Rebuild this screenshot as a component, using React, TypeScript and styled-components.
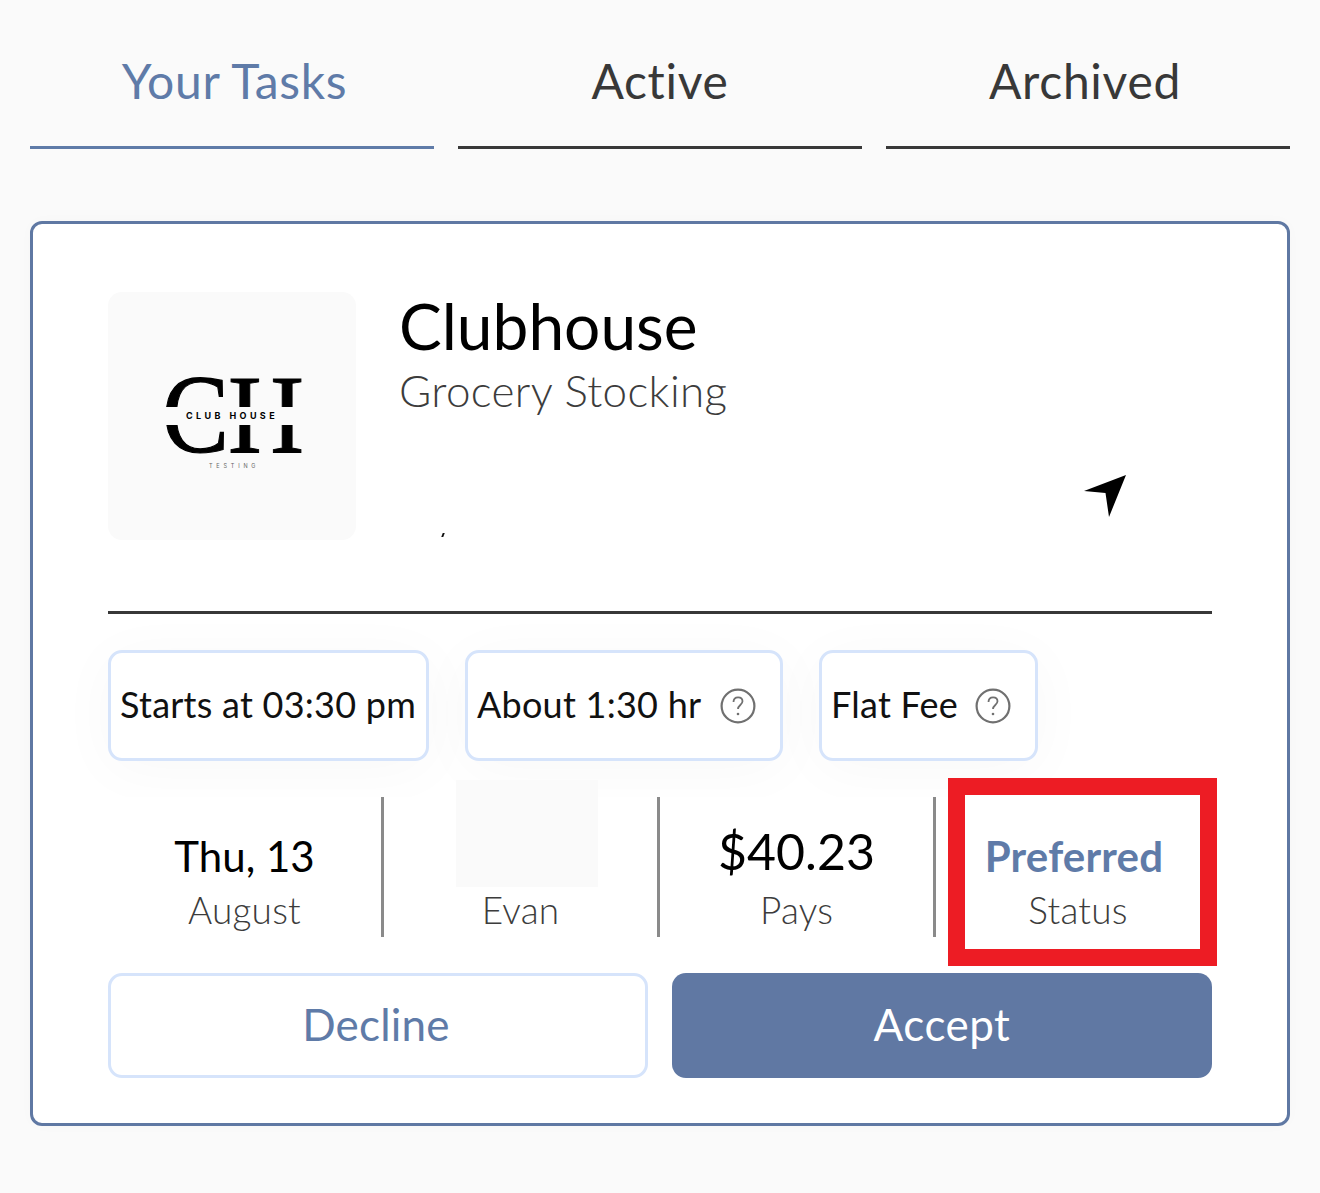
import React from 'react';
import styled, { createGlobalStyle } from 'styled-components';

const GlobalStyle = createGlobalStyle`
    html, body {
        margin: 0;
        padding: 0;
        background: #fafafa;
        font-family: Lato, "Open Sans", sans-serif;
    }
    * {
        box-sizing: border-box;
    }
`;

const Page = styled.div`
    width: 1320px;
    height: 1193px;
    padding: 0 30px;
    overflow: hidden;
`;

const Tabs = styled.div`
    display: grid;
    grid-template-columns: repeat(3, 404px);
    gap: 24px;
    height: 149px;
`;

const Tab = styled.div<{ $active?: boolean; $nudge?: number }>`
    display: flex;
    justify-content: center;
    padding-top: 51px;
    padding-left: ${(p) => Math.max(p.$nudge || 0, 0)}px;
    padding-right: ${(p) => Math.max(-(p.$nudge || 0), 0)}px;
    font-size: 48px;
    line-height: 60px;
    letter-spacing: 0.7px;
    color: ${(p) => (p.$active ? '#5f7ba8' : '#383838')};
    border-bottom: 3px solid ${(p) => (p.$active ? '#5f7ba8' : '#383838')};
`;

const Card = styled.div`
    margin-top: 72px;
    height: 905px;
    padding: 68px 75px 0;
    background: #fff;
    border: 3px solid #5f78a3;
    border-radius: 12px;
    box-shadow: 0 0 14px rgba(0, 0, 0, 0.02);
`;

const Header = styled.div`
    display: flex;
    gap: 43px;
    height: 248px;
`;

const LogoBox = styled.div`
    flex: 0 0 248px;
    height: 248px;
    background: #fafafa;
    border-radius: 14px;
`;

const Info = styled.div`
    flex: 1;
    display: flex;
    flex-direction: column;
`;

const Title = styled.div`
    font-size: 64px;
    line-height: 68px;
    color: #000;
`;

const Subtitle = styled.div`
    margin-top: 1px;
    font-size: 44px;
    line-height: 58px;
    font-weight: 300;
    letter-spacing: 0.35px;
    color: #3c3c3c;
`;

const LocationRow = styled.div`
    margin-top: auto;
    display: flex;
    justify-content: space-between;
    align-items: flex-end;
`;

const Tick = styled.span`
    width: 2px;
    height: 4px;
    margin: 0 0 3px 43px;
    background: #111;
    transform: skewX(-20deg);
`;

const Arrow = styled.svg`
    width: 44px;
    height: 44px;
    margin: 0 84px 21px 0;
`;

const Divider = styled.div`
    margin-top: 71px;
    height: 3px;
    background: #383838;
`;

const Chips = styled.div`
    display: flex;
    gap: 36px;
    margin-top: 36px;
`;

const Chip = styled.div<{ $w: number }>`
    width: ${(p) => p.$w}px;
    height: 111px;
    display: flex;
    align-items: center;
    justify-content: space-between;
    padding: 0 24px 4px 9px;
    background: #fff;
    border: 3px solid #d6e4fb;
    border-radius: 14px;
    font-size: 36px;
    letter-spacing: 0.25px;
    color: #111;
    white-space: nowrap;
    box-shadow: 0 8px 60px rgba(0, 0, 0, 0.03);
`;

const Help = styled.svg`
    flex: none;
    width: 36px;
    height: 36px;
    margin-top: 5px;
`;

const Stats = styled.div`
    position: relative;
    display: grid;
    grid-template-columns: 276px 276px 276px 276px;
    margin-top: 36px;
    height: 140px;
    background: #fff;
`;

const Stat = styled.div<{ $last?: boolean }>`
    position: relative;
    display: flex;
    flex-direction: column;
    align-items: center;
    border-right: ${(p) => (p.$last ? '0' : '3px solid #8a8a8a')};
`;

const StatValue = styled.div<{ $big?: boolean; $accent?: boolean }>`
    height: 88px;
    padding-top: ${(p) => (p.$big ? '22px' : '31px')};
    font-size: ${(p) => (p.$big ? '50px' : '42px')};
    line-height: ${(p) => (p.$big ? '64px' : '56px')};
    font-weight: ${(p) => (p.$accent ? 700 : 400)};
    letter-spacing: ${(p) => (p.$accent ? '0.2px' : '0')};
    color: ${(p) => (p.$accent ? '#5f7ba8' : '#000')};
    white-space: nowrap;
`;

const StatLabel = styled.div<{ $shift?: number }>`
    margin-left: ${(p) => p.$shift || 0}px;
    font-size: 37px;
    line-height: 50px;
    font-weight: 300;
    letter-spacing: 0.2px;
    color: #3c3c3c;
`;

const AvatarMask = styled.div`
    position: absolute;
    left: 72px;
    top: -17px;
    width: 142px;
    height: 107px;
    background: #fafafa;
`;

const Highlight = styled.div`
    position: absolute;
    left: 12px;
    top: -19px;
    width: 269px;
    height: 188px;
    border: 17px solid #ed1c24;
`;

const Actions = styled.div`
    display: grid;
    grid-template-columns: 1fr 1fr;
    gap: 24px;
    margin-top: 36px;
`;

const ActionButton = styled.button<{ $primary?: boolean }>`
    height: 105px;
    padding: 0 ${(p) => (p.$primary ? '0' : '4px')} 4px 0;
    font-family: inherit;
    font-size: 44px;
    letter-spacing: ${(p) => (p.$primary ? '0.5px' : '0.2px')};
    color: ${(p) => (p.$primary ? '#fff' : '#5f7ba8')};
    background: ${(p) => (p.$primary ? '#6078a3' : '#fff')};
    border: ${(p) => (p.$primary ? '0' : '3px solid #d6e4fb')};
    border-radius: 14px;
`;

const HelpIcon = () => (
    <Help viewBox="0 0 36 36" fill="none" stroke="#707070" strokeWidth="2.2">
        <circle cx="18" cy="18" r="16.4" />
        <path d="M13.5 14c0-3 2-4.7 4.6-4.7 2.6 0 4.4 1.7 4.4 4 0 3.6-4.5 3.8-4.5 7.7" strokeWidth="1.8" />
        <circle cx="18" cy="26" r="1.3" fill="#707070" stroke="none" />
    </Help>
);

const Logo = () => (
    <svg viewBox="0 0 248 248" width="248" height="248">
        <text
            x="54"
            y="160"
            fontFamily='"Liberation Serif", serif'
            fontSize="112"
            textLength="67"
            lengthAdjust="spacingAndGlyphs"
            stroke="#000"
            strokeWidth="1.2"
            fill="#000"
        >
            C
        </text>
        <text
            x="120"
            y="160"
            fontFamily='"Liberation Serif", serif'
            fontSize="112"
            textLength="76"
            lengthAdjust="spacingAndGlyphs"
            stroke="#000"
            strokeWidth="1"
            fill="#000"
        >
            H
        </text>
        <rect x="50" y="115" width="150" height="18" fill="#fafafa" />
        <text
            x="78"
            y="127"
            fontFamily='Inter, "Liberation Sans", sans-serif'
            fontWeight="700"
            fontSize="9"
            letterSpacing="3.4"
            fill="#000"
        >
            CLUB HOUSE
        </text>
        <text
            x="101"
            y="176"
            fontFamily='Inter, "Liberation Sans", sans-serif'
            fontSize="5.5"
            letterSpacing="3.8"
            fill="#666"
        >
            TESTING
        </text>
    </svg>
);

const App = () => {
    return (
        <Page>
            <GlobalStyle />
            <Tabs>
                <Tab $active $nudge={5}>Your Tasks</Tab>
                <Tab>Active</Tab>
                <Tab $nudge={-6}>Archived</Tab>
            </Tabs>
            <Card>
                <Header>
                    <LogoBox>
                        <Logo />
                    </LogoBox>
                    <Info>
                        <Title>Clubhouse</Title>
                        <Subtitle>Grocery Stocking</Subtitle>
                        <LocationRow>
                            <Tick />
                            <Arrow viewBox="0 0 44 44">
                                <polygon points="42,0 0,16 21.5,18 25,42" fill="#000" />
                            </Arrow>
                        </LocationRow>
                    </Info>
                </Header>
                <Divider />
                <Chips>
                    <Chip $w={321}>Starts at 03:30 pm</Chip>
                    <Chip $w={318}>
                        About 1:30 hr
                        <HelpIcon />
                    </Chip>
                    <Chip $w={219}>
                        Flat Fee
                        <HelpIcon />
                    </Chip>
                </Chips>
                <Stats>
                    <Stat>
                        <StatValue>Thu, 13</StatValue>
                        <StatLabel>August</StatLabel>
                    </Stat>
                    <Stat>
                        <AvatarMask />
                        <StatValue />
                        <StatLabel>Evan</StatLabel>
                    </Stat>
                    <Stat>
                        <StatValue $big>$40.23</StatValue>
                        <StatLabel>Pays</StatLabel>
                    </Stat>
                    <Stat $last>
                        <StatValue $accent>Preferred</StatValue>
                        <StatLabel $shift={8}>Status</StatLabel>
                        <Highlight />
                    </Stat>
                </Stats>
                <Actions>
                    <ActionButton>Decline</ActionButton>
                    <ActionButton $primary>Accept</ActionButton>
                </Actions>
            </Card>
        </Page>
    );
};

export default App;
